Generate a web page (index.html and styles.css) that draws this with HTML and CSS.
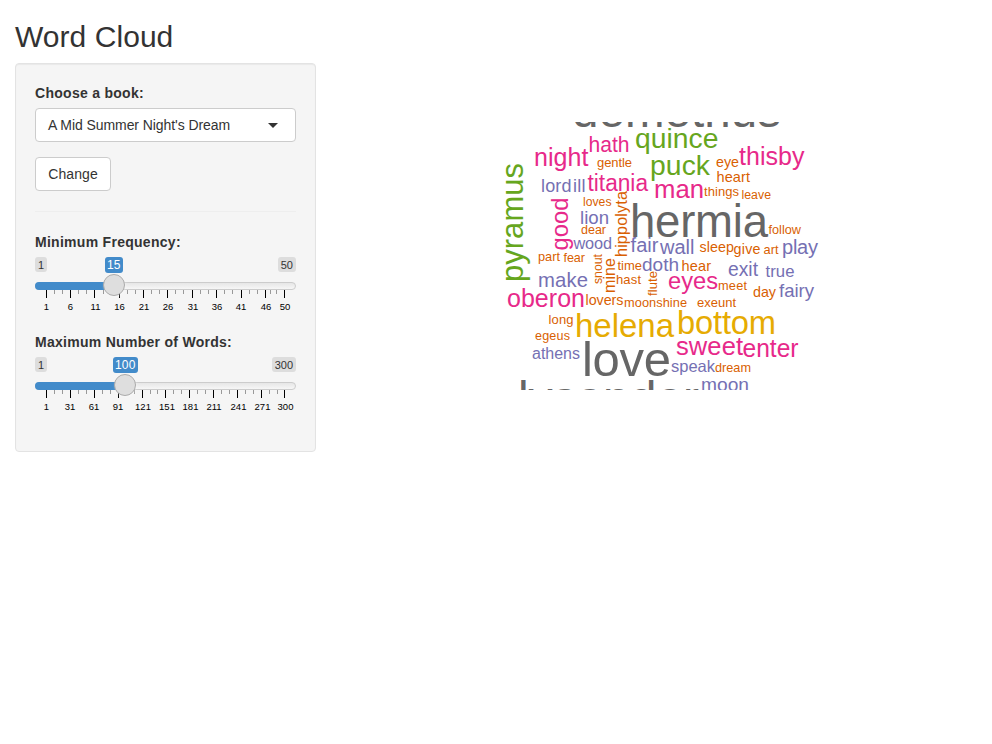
FILE: index.html
```html
<!DOCTYPE html>
<html lang="en">
<head>
<meta charset="utf-8">
<title>Word Cloud</title>
<link rel="stylesheet" href="styles.css">
</head>
<body>
<h2>Word Cloud</h2>
<div class="row">
<form class="well">
  <label class="book">Choose a book:</label>
  <div class="select"><span>A Mid Summer Night's Dream</span><i class="caret"></i></div>
  <button type="button" class="btn">Change</button>
  <hr>
  <div class="slider">
    <label>Minimum Frequency:</label>
    <div class="values"><span class="tag">1</span><span class="tag">50</span><span class="tag current" style="left:70px">15</span></div>
    <div class="track"><div class="fill" style="width:79px"></div><div class="handle" style="left:68px"></div></div>
    <svg class="scale" width="261" height="24" viewBox="35 290 261 24">
      <path class="minor" d="M54.5 290v4M62.5 290v4M78.5 290v4M86.5 290v4M103.5 290v4M111.5 290v4M127.5 290v4M135.5 290v4M151.5 290v4M159.5 290v4M175.5 290v4M183.5 290v4M200.5 290v4M208.5 290v4M224.5 290v4M232.5 290v4M249.5 290v4M257.5 290v4M270.5 290v4M276.5 290v4"/>
      <path class="major" d="M46.5 290v8M70.5 290v8M94.5 290v8M119.5 290v8M143.5 290v8M167.5 290v8M192.5 290v8M216.5 290v8M241.5 290v8M265.5 290v8M284.5 290v8"/>
      <text x="46.5" y="310">1</text><text x="70.5" y="310">6</text><text x="95.5" y="310">11</text><text x="119.5" y="310">16</text><text x="144" y="310">21</text><text x="168" y="310">26</text><text x="193" y="310">31</text><text x="217" y="310">36</text><text x="241" y="310">41</text><text x="266" y="310">46</text><text x="285" y="310">50</text>
    </svg>
  </div>
  <div class="slider">
    <label>Maximum Number of Words:</label>
    <div class="values"><span class="tag">1</span><span class="tag">300</span><span class="tag current" style="left:78px">100</span></div>
    <div class="track"><div class="fill" style="width:90px"></div><div class="handle" style="left:79px"></div></div>
    <svg class="scale" width="261" height="24" viewBox="35 290 261 24">
      <path class="minor" d="M54.5 290v4M62.5 290v4M78.5 290v4M86.5 290v4M102.5 290v4M110.5 290v4M126.5 290v4M134.5 290v4M150.5 290v4M157.5 290v4M173.5 290v4M181.5 290v4M197.5 290v4M205.5 290v4M221.5 290v4M229.5 290v4M245.5 290v4M253.5 290v4M269.5 290v4M277.5 290v4"/>
      <path class="major" d="M46.5 290v8M70.5 290v8M94.5 290v8M118.5 290v8M142.5 290v8M165.5 290v8M189.5 290v8M213.5 290v8M237.5 290v8M261.5 290v8M284.5 290v8"/>
      <text x="46.5" y="310">1</text><text x="70" y="310">31</text><text x="94" y="310">61</text><text x="118" y="310">91</text><text x="143" y="310">121</text><text x="167" y="310">151</text><text x="190.5" y="310">181</text><text x="214" y="310">211</text><text x="238.5" y="310">241</text><text x="262.5" y="310">271</text><text x="285.5" y="310">300</text>
    </svg>
  </div>
</form>
<main>
<svg class="cloud" width="631" height="268" viewBox="346 122 631 268">
  <g class="gray">
    <text x="572" y="127" font-size="47.5" textLength="209">demetrius</text>
    <text x="630" y="237" font-size="45.5" textLength="138">hermia</text>
    <text x="582" y="376" font-size="49" textLength="89">love</text>
    <text x="518" y="415" font-size="48" textLength="181">lysander</text>
  </g>
  <g class="gold">
    <text x="575" y="337" font-size="33" textLength="99">helena</text>
    <text x="677" y="334" font-size="32.7" textLength="99">bottom</text>
  </g>
  <g class="green">
    <text x="635" y="148" font-size="28.3" textLength="83.5">quince</text>
    <text x="650" y="175" font-size="28.3" textLength="60">puck</text>
    <text transform="translate(523 282) rotate(-90)" font-size="31" textLength="119">pyramus</text>
  </g>
  <g class="pink">
    <text x="588.5" y="152" font-size="22.3" textLength="41" lengthAdjust="spacingAndGlyphs">hath</text>
    <text x="534" y="166" font-size="25" textLength="54.5">night</text>
    <text x="739" y="165" font-size="25" textLength="65.5">thisby</text>
    <text x="587.5" y="191" font-size="23.5" textLength="60.5" lengthAdjust="spacingAndGlyphs">titania</text>
    <text x="654" y="198" font-size="25.7" textLength="50">man</text>
    <text transform="translate(568 250.5) rotate(-90)" font-size="23.7" textLength="53">good</text>
    <text x="668" y="289" font-size="24.3" textLength="50" lengthAdjust="spacingAndGlyphs">eyes</text>
    <text x="507" y="307" font-size="25" textLength="78">oberon</text>
    <text x="676" y="355" font-size="25.5" textLength="67">sweet</text>
    <text x="742.5" y="357" font-size="25.2" textLength="56" lengthAdjust="spacingAndGlyphs">enter</text>
  </g>
  <g class="purple">
    <text x="541" y="192" font-size="18" textLength="30.5">lord</text>
    <text x="573" y="192" font-size="18" textLength="12.5">ill</text>
    <text x="580" y="224" font-size="18.6" textLength="29">lion</text>
    <text x="573.5" y="249" font-size="16.3" textLength="38.5">wood</text>
    <text x="630.5" y="252" font-size="20" textLength="28">fair</text>
    <text x="660" y="254" font-size="20" textLength="34.5">wall</text>
    <text x="782" y="254" font-size="20" textLength="36">play</text>
    <text x="642" y="271" font-size="19" textLength="37">doth</text>
    <text x="728" y="276" font-size="19.6" textLength="30" lengthAdjust="spacingAndGlyphs">exit</text>
    <text x="765.5" y="277" font-size="16.7" textLength="29">true</text>
    <text x="538" y="287" font-size="20.3" textLength="50">make</text>
    <text x="779" y="297" font-size="18.6" textLength="35">fairy</text>
    <text x="532" y="359" font-size="16" textLength="48">athens</text>
    <text x="671" y="372" font-size="16.5" textLength="44">speak</text>
    <text x="701" y="391" font-size="19.2" textLength="48">moon</text>
  </g>
  <g class="orange">
    <text x="597" y="167" font-size="13" textLength="35">gentle</text>
    <text x="716" y="167" font-size="14.3" textLength="23">eye</text>
    <text x="716.5" y="182" font-size="14.5" textLength="33.5">heart</text>
    <text x="704" y="196" font-size="13" textLength="35">things</text>
    <text x="741.5" y="199" font-size="12.3" textLength="29.5">leave</text>
    <text x="583" y="206" font-size="12.2" textLength="28.5">loves</text>
    <text x="768.5" y="234" font-size="12.7" textLength="32.5">follow</text>
    <text x="581" y="234" font-size="12.5" textLength="25">dear</text>
    <text transform="translate(627 257) rotate(-90)" font-size="16.3" textLength="66">hippolyta</text>
    <text x="699.5" y="252" font-size="14.3" textLength="34.5">sleep</text>
    <text x="733.5" y="254" font-size="14.3" textLength="27">give</text>
    <text x="763.5" y="254" font-size="12.8" textLength="15">art</text>
    <text x="538" y="261" font-size="12.8" textLength="22">part</text>
    <text x="563.5" y="262" font-size="12.6" textLength="21.5">fear</text>
    <text transform="translate(602 284) rotate(-90)" font-size="12.3" textLength="30">snout</text>
    <text transform="translate(615 293) rotate(-90)" font-size="16" textLength="35">mine</text>
    <text x="617.5" y="270" font-size="13" textLength="24.5">time</text>
    <text x="681.5" y="271" font-size="14.5" textLength="29.5">hear</text>
    <text x="616" y="284" font-size="13" textLength="25">hast</text>
    <text transform="translate(657 296) rotate(-90)" font-size="13" textLength="25">flute</text>
    <text x="718" y="290" font-size="12.8" textLength="29">meet</text>
    <text x="753" y="297" font-size="14.3" textLength="23">day</text>
    <text x="585.5" y="305" font-size="14.3" textLength="38">lovers</text>
    <text x="624" y="307" font-size="12.8" textLength="63">moonshine</text>
    <text x="697" y="307" font-size="13" textLength="39">exeunt</text>
    <text x="548.5" y="324" font-size="13" textLength="25">long</text>
    <text x="535" y="340" font-size="12.6" textLength="35">egeus</text>
    <text x="715" y="372" font-size="12.7" textLength="36">dream</text>
  </g>
</svg>
</main>
</div>
</body>
</html>
```
FILE: styles.css
```css
* { box-sizing: border-box; }
body {
  margin: 0;
  padding: 0 15px;
  background: #fff;
  color: #333;
  font: 14px/20px "Liberation Sans", Arial, sans-serif;
}
h2 { margin: 20px 0 10px; font-size: 30px; font-weight: 500; line-height: 33px; letter-spacing: .05px; }
.row { display: flex; gap: 30px; align-items: flex-start; }
.well {
  width: 301px;
  height: 389px;
  padding: 19px;
  background: #f5f5f5;
  border: 1px solid #e3e3e3;
  border-radius: 4px;
  box-shadow: inset 0 1px 1px rgba(0, 0, 0, .05);
}
label { display: block; margin-bottom: 5px; font-weight: 700; letter-spacing: .28px; }
.select {
  display: flex;
  align-items: center;
  justify-content: space-between;
  height: 34px;
  margin-bottom: 15px;
  padding: 0 17px 0 12px;
  background: #fff;
  border: 1px solid #ccc;
  border-radius: 4px;
  letter-spacing: -.07px;
}
.caret { border: 5px solid transparent; border-top-color: #333; border-bottom: 0; }
.btn {
  display: block;
  width: 76px;
  height: 34px;
  padding: 0 12px;
  background: #fff;
  border: 1px solid #ccc;
  border-radius: 4px;
  color: #333;
  font: inherit;
  letter-spacing: .1px;
}
hr { margin: 20px 0; border: 0; border-top: 1px solid #eee; }
.slider { height: 100px; }
.slider label { margin: 0; }
.values { position: relative; display: flex; justify-content: space-between; height: 30px; padding-top: 5px; }
.tag {
  height: 15px;
  padding: 1px 3px;
  background: #ddd;
  border-radius: 3px;
  font-size: 11px;
  line-height: 14px;
}
.current {
  position: absolute;
  top: 5px;
  height: 16px;
  padding: 1px 2px;
  background: #428bca;
  color: #fff;
  font-size: 12px;
  letter-spacing: .2px;
}
.track {
  position: relative;
  height: 8px;
  background: linear-gradient(#dedede -50%, #fff 150%);
  border: 1px solid #ccc;
  border-radius: 8px;
}
.fill { height: 8px; margin: -1px; background: #428bca; border-radius: 8px 0 0 8px; }
.handle {
  position: absolute;
  top: -9px;
  width: 22px;
  height: 22px;
  margin-left: -1px;
  background: #dedede;
  border: 1px solid #ababab;
  border-radius: 50%;
  box-shadow: 1px 1px 3px rgba(255, 255, 255, .3);
}
.scale { display: block; }
.scale text { font-size: 9.5px; text-anchor: middle; fill: #000; }
.minor { stroke: #999; }
.major { stroke: #000; }
main { flex: 1; padding-top: 59px; }
.cloud { display: block; overflow: hidden; }
.gray { fill: #666; }
.gold { fill: #e6ab02; }
.green { fill: #66a61e; }
.pink { fill: #e7298a; }
.purple { fill: #7570b3; }
.orange { fill: #d95f02; }
```
